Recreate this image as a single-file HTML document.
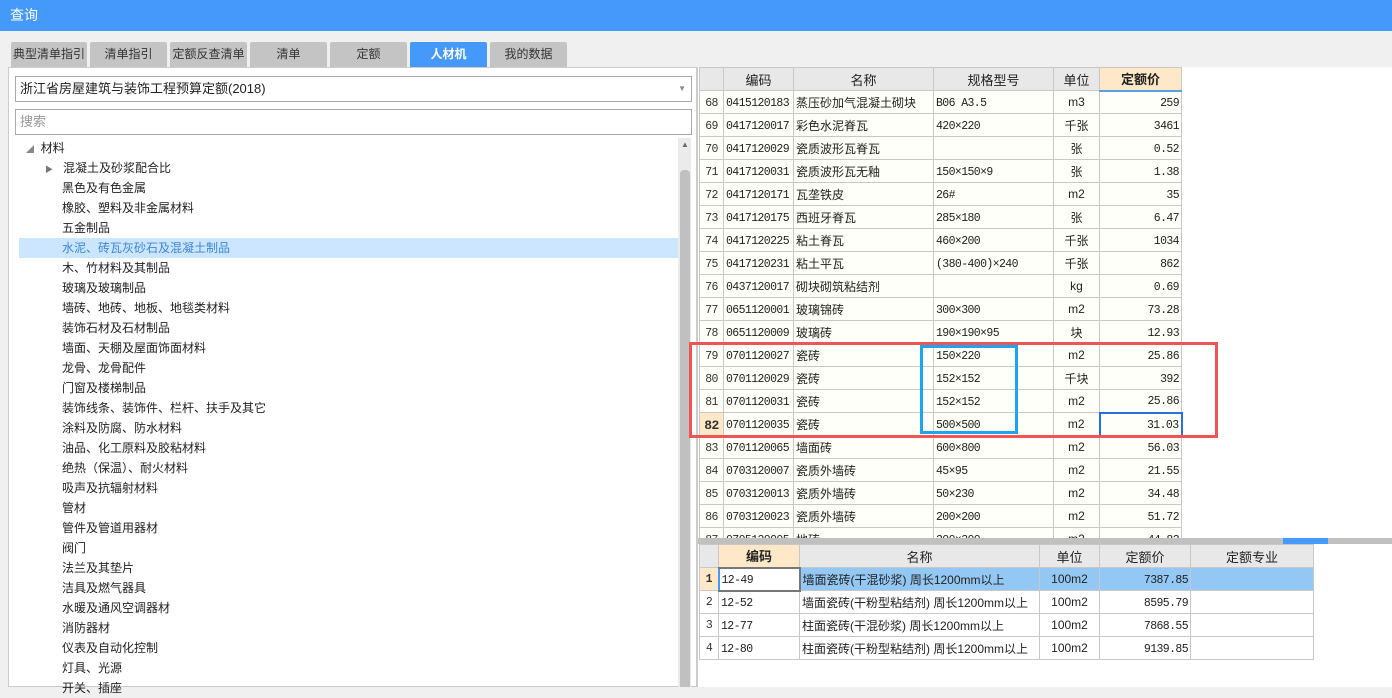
<!DOCTYPE html>
<html><head><meta charset="utf-8"><style>
*{margin:0;padding:0;box-sizing:border-box}
body{width:1392px;height:687px;overflow:hidden;background:#f0f0f0;font-family:"Liberation Sans","Noto Sans CJK SC",sans-serif;font-size:12px;color:#222;position:relative}
.abs{position:absolute}
.title{left:0;top:0;width:1392px;height:31px;background:#4499fb;color:#fff;font-size:14px;line-height:31px;padding-left:10px}
.tab{top:42px;height:25px;background:#c4c4c4;color:#333;text-align:center;line-height:25px;font-size:12px;border-radius:2px 2px 0 0;white-space:nowrap;overflow:hidden}
.tab.on{background:#4499fb;color:#fff;font-weight:bold}
.left{left:8px;top:67px;width:689px;height:620px;background:#fff;border:1px solid #ccc}
.box{background:#fff;border:1px solid #aaa;height:26px;line-height:24px;padding-left:4px}
.tree div{height:20px;line-height:20px;padding-left:62px;font-size:12px;white-space:nowrap}
table{border-collapse:collapse;font-family:"Liberation Sans","Noto Sans CJK SC",sans-serif;font-size:12px}
td{border:1px solid #c8c8c8;height:23px;padding:0 2px;white-space:nowrap;overflow:hidden;vertical-align:middle}
td.m,td.r,td.s,td.n{font-family:"Liberation Mono",monospace;font-size:11.5px;letter-spacing:-0.6px;padding-top:2px}
.t1 td{background:#fffff9}
.t1 th,.t2 th{background:#e8e8e8;border:1px solid #c8c8c8;font-weight:normal;height:23px;font-family:"Liberation Sans","Noto Sans CJK SC",sans-serif;font-size:13px}
.n{text-align:center;color:#333}
.r{text-align:right}
.c{text-align:center}
</style></head><body>
<div class="abs title">查询</div>
<div class="abs tab" style="left:11px;width:76px">典型清单指引</div>
<div class="abs tab" style="left:90px;width:77px">清单指引</div>
<div class="abs tab" style="left:170px;width:77px">定额反查清单</div>
<div class="abs tab" style="left:250px;width:77px">清单</div>
<div class="abs tab" style="left:330px;width:77px">定额</div>
<div class="abs tab on" style="left:410px;width:77px">人材机</div>
<div class="abs tab" style="left:490px;width:77px">我的数据</div>
<div class="abs left"></div>
<div class="abs box" style="left:15px;top:76px;width:677px;font-size:13px">浙江省房屋建筑与装饰工程预算定额(2018)<span style="position:absolute;right:5px;top:0;color:#888;font-size:8px">▼</span></div>
<div class="abs box" style="left:15px;top:109px;width:677px;color:#999;font-size:13px">搜索</div>
<div class="abs" style="left:678px;top:138px;width:13px;height:549px;background:#ebebeb"></div>
<div class="abs" style="left:680px;top:170px;width:10px;height:517px;background:#c0c0c0;border-radius:4px 4px 0 0"></div>
<div class="abs" style="left:681px;top:140px;color:#666;font-size:8px">▲</div>
<div class="abs" style="left:19px;top:238px;width:659px;height:20px;background:#cce6ff"></div>
<div class="abs tree" style="left:0;top:138px;width:678px">
<div style="padding-left:26px"><span style="color:#888;font-size:8px">◢</span>&nbsp;&nbsp;材料</div>
<div style="padding-left:45px"><span style="color:#777;font-size:8px">▶</span>&nbsp;&nbsp;&nbsp;混凝土及砂浆配合比</div>
<div>黑色及有色金属</div><div>橡胶、塑料及非金属材料</div><div>五金制品</div>
<div style="color:#3b86d8">水泥、砖瓦灰砂石及混凝土制品</div>
<div>木、竹材料及其制品</div><div>玻璃及玻璃制品</div><div>墙砖、地砖、地板、地毯类材料</div><div>装饰石材及石材制品</div><div>墙面、天棚及屋面饰面材料</div><div>龙骨、龙骨配件</div><div>门窗及楼梯制品</div><div>装饰线条、装饰件、栏杆、扶手及其它</div><div>涂料及防腐、防水材料</div><div>油品、化工原料及胶粘材料</div><div>绝热（保温）、耐火材料</div><div>吸声及抗辐射材料</div><div>管材</div><div>管件及管道用器材</div><div>阀门</div><div>法兰及其垫片</div><div>洁具及燃气器具</div><div>水暖及通风空调器材</div><div>消防器材</div><div>仪表及自动化控制</div><div>灯具、光源</div><div>开关、插座</div>
</div>
<div class="abs" style="left:697px;top:67px;width:695px;height:620px;background:#fff;border-left:1px solid #ccc"></div>
<div class="abs" style="left:699px;top:67px;width:493px;height:471px;overflow:hidden">
<table class="t1" style="table-layout:fixed;width:482px">
<colgroup><col style="width:24px"><col style="width:70px"><col style="width:140px"><col style="width:120px"><col style="width:46px"><col style="width:82px"></colgroup>
<tr><th></th><th>编码</th><th>名称</th><th>规格型号</th><th>单位</th><th style="background:#ffe8c8;font-weight:bold;border-bottom:2px solid #5aa0e0">定额价</th></tr>
<tr><td class="n">68</td><td class="m">0415120183</td><td>蒸压砂加气混凝土砌块</td><td class="s">B06 A3.5</td><td class="c">m3</td><td class="r">259</td></tr>
<tr><td class="n">69</td><td class="m">0417120017</td><td>彩色水泥脊瓦</td><td class="s">420×220</td><td class="c">千张</td><td class="r">3461</td></tr>
<tr><td class="n">70</td><td class="m">0417120029</td><td>瓷质波形瓦脊瓦</td><td></td><td class="c">张</td><td class="r">0.52</td></tr>
<tr><td class="n">71</td><td class="m">0417120031</td><td>瓷质波形瓦无釉</td><td class="s">150×150×9</td><td class="c">张</td><td class="r">1.38</td></tr>
<tr><td class="n">72</td><td class="m">0417120171</td><td>瓦垄铁皮</td><td class="s">26#</td><td class="c">m2</td><td class="r">35</td></tr>
<tr><td class="n">73</td><td class="m">0417120175</td><td>西班牙脊瓦</td><td class="s">285×180</td><td class="c">张</td><td class="r">6.47</td></tr>
<tr><td class="n">74</td><td class="m">0417120225</td><td>粘土脊瓦</td><td class="s">460×200</td><td class="c">千张</td><td class="r">1034</td></tr>
<tr><td class="n">75</td><td class="m">0417120231</td><td>粘土平瓦</td><td class="s">(380-400)×240</td><td class="c">千张</td><td class="r">862</td></tr>
<tr><td class="n">76</td><td class="m">0437120017</td><td>砌块砌筑粘结剂</td><td></td><td class="c">kg</td><td class="r">0.69</td></tr>
<tr><td class="n">77</td><td class="m">0651120001</td><td>玻璃锦砖</td><td class="s">300×300</td><td class="c">m2</td><td class="r">73.28</td></tr>
<tr><td class="n">78</td><td class="m">0651120009</td><td>玻璃砖</td><td class="s">190×190×95</td><td class="c">块</td><td class="r">12.93</td></tr>
<tr><td class="n">79</td><td class="m">0701120027</td><td>瓷砖</td><td class="s">150×220</td><td class="c">m2</td><td class="r">25.86</td></tr>
<tr><td class="n">80</td><td class="m">0701120029</td><td>瓷砖</td><td class="s">152×152</td><td class="c">千块</td><td class="r">392</td></tr>
<tr><td class="n">81</td><td class="m">0701120031</td><td>瓷砖</td><td class="s">152×152</td><td class="c">m2</td><td class="r">25.86</td></tr>
<tr><td class="n" style="background:#ffe8c8;font-weight:bold;font-size:13px">82</td><td class="m">0701120035</td><td>瓷砖</td><td class="s">500×500</td><td class="c">m2</td><td class="r" style="border:2px solid #2a6fe0">31.03</td></tr>
<tr><td class="n">83</td><td class="m">0701120065</td><td>墙面砖</td><td class="s">600×800</td><td class="c">m2</td><td class="r">56.03</td></tr>
<tr><td class="n">84</td><td class="m">0703120007</td><td>瓷质外墙砖</td><td class="s">45×95</td><td class="c">m2</td><td class="r">21.55</td></tr>
<tr><td class="n">85</td><td class="m">0703120013</td><td>瓷质外墙砖</td><td class="s">50×230</td><td class="c">m2</td><td class="r">34.48</td></tr>
<tr><td class="n">86</td><td class="m">0703120023</td><td>瓷质外墙砖</td><td class="s">200×200</td><td class="c">m2</td><td class="r">51.72</td></tr>
<tr><td class="n">87</td><td class="m">0705120005</td><td>地砖</td><td class="s">300×300</td><td class="c">m2</td><td class="r">44.83</td></tr>
</table></div>
<div class="abs" style="left:698px;top:538px;width:694px;height:6px;background:#c0c0c0"></div>
<div class="abs" style="left:1283px;top:538px;width:45px;height:6px;background:#4499fb"></div>
<div class="abs" style="left:699px;top:544px">
<table class="t2" style="table-layout:fixed;width:614px">
<colgroup><col style="width:19px"><col style="width:81px"><col style="width:240px"><col style="width:60px"><col style="width:91px"><col style="width:123px"></colgroup>
<tr><th></th><th style="background:#ffe8c8;font-weight:bold">编码</th><th>名称</th><th>单位</th><th>定额价</th><th>定额专业</th></tr>
<tr><td class="n" style="background:#ffe8c8;font-weight:bold;padding:0">1</td><td class="m" style="border:2px solid #777;border-left-color:#4499fb">12-49</td><td style="background:#94c8f4">墙面瓷砖(干混砂浆) 周长1200mm以上</td><td class="c" style="background:#94c8f4">100m2</td><td class="r" style="background:#94c8f4">7387.85</td><td style="background:#94c8f4"></td></tr>
<tr><td class="n" style="padding:0">2</td><td class="m">12-52</td><td>墙面瓷砖(干粉型粘结剂) 周长1200mm以上</td><td class="c">100m2</td><td class="r">8595.79</td><td></td></tr>
<tr><td class="n" style="padding:0">3</td><td class="m">12-77</td><td>柱面瓷砖(干混砂浆) 周长1200mm以上</td><td class="c">100m2</td><td class="r">7868.55</td><td></td></tr>
<tr><td class="n" style="padding:0">4</td><td class="m">12-80</td><td>柱面瓷砖(干粉型粘结剂) 周长1200mm以上</td><td class="c">100m2</td><td class="r">9139.85</td><td></td></tr>
</table></div>
<div class="abs" style="left:689px;top:342px;width:529px;height:96px;border:3px solid #f05454"></div>
<div class="abs" style="left:920px;top:345px;width:98px;height:89px;border:3px solid #1aa6f0"></div>
</body></html>
